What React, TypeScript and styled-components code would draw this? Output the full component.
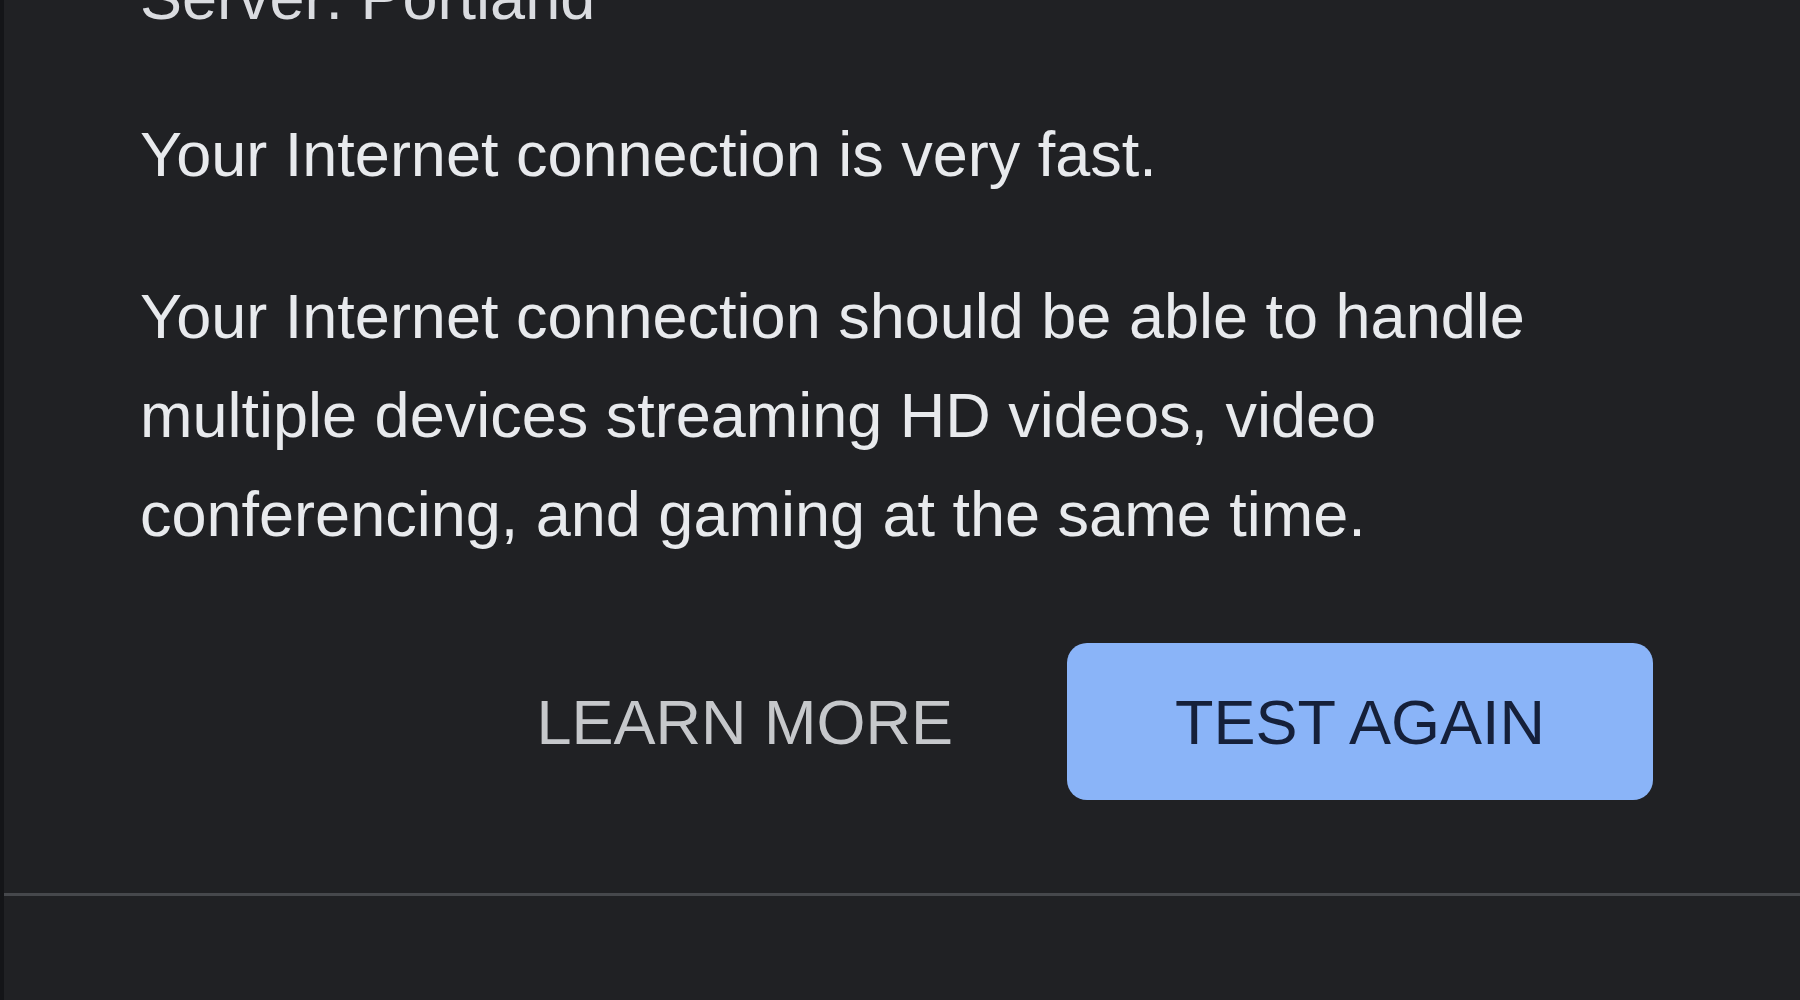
import styled, { createGlobalStyle } from "styled-components";

const GlobalStyle = createGlobalStyle`
  html, body {
    margin: 0;
    padding: 0;
    background: #202124;
    overflow: hidden;
  }
  * {
    box-sizing: border-box;
  }
`;

export default function App() {
  return (
    <>
      <GlobalStyle />
      <PageStyled>
        <ResultCard>
          <CardBody>
            <ServerLine>Server: Portland</ServerLine>
            <Paragraph $gap={63}>Your Internet connection is very fast.</Paragraph>
            <Paragraph $gap={79}>
              Your Internet connection should be able to handle multiple
              devices streaming HD videos, video conferencing, and gaming at
              the same time.
            </Paragraph>
            <Actions>
              <TextButton type="button">LEARN MORE</TextButton>
              <FilledButton type="button">TEST AGAIN</FilledButton>
            </Actions>
          </CardBody>
          <Divider />
        </ResultCard>
      </PageStyled>
    </>
  );
}

const PageStyled = styled.main`
  width: 100%;
  height: 100vh;
  display: flex;
  background: #202124;
  border-left: 4px solid #141518;
  font-family: "Liberation Sans", Arial, sans-serif;
  color: #e8eaed;
`;

const ResultCard = styled.section`
  flex: 1;
  display: flex;
  flex-direction: column;
  margin-top: -52px;
`;

const CardBody = styled.div`
  padding: 0 147px 93px 136px;
  display: flex;
  flex-direction: column;
`;

const ServerLine = styled.div`
  font-size: 63px;
  line-height: 99px;
  color: #dadce0;
  margin-bottom: 58px;
`;

const Paragraph = styled.p<{ $gap: number }>`
  margin: 0 0 ${(p) => p.$gap}px;
  font-size: 63px;
  line-height: 99px;
  color: #e8eaed;
`;

const Actions = styled.div`
  display: flex;
  justify-content: flex-end;
  align-items: center;
  gap: 57px;
`;

const TextButton = styled.button`
  height: 157px;
  padding: 0 57px;
  border: none;
  background: transparent;
  color: #c6c8cb;
  font-family: inherit;
  font-size: 63px;
  cursor: pointer;
`;

const FilledButton = styled.button`
  height: 157px;
  padding: 0 108px;
  border: none;
  border-radius: 20px;
  background: #8ab4f8;
  color: #15203a;
  font-family: inherit;
  font-size: 63px;
  cursor: pointer;
`;

const Divider = styled.hr`
  margin: 0;
  border: none;
  height: 3px;
  background: #46484c;
`;
